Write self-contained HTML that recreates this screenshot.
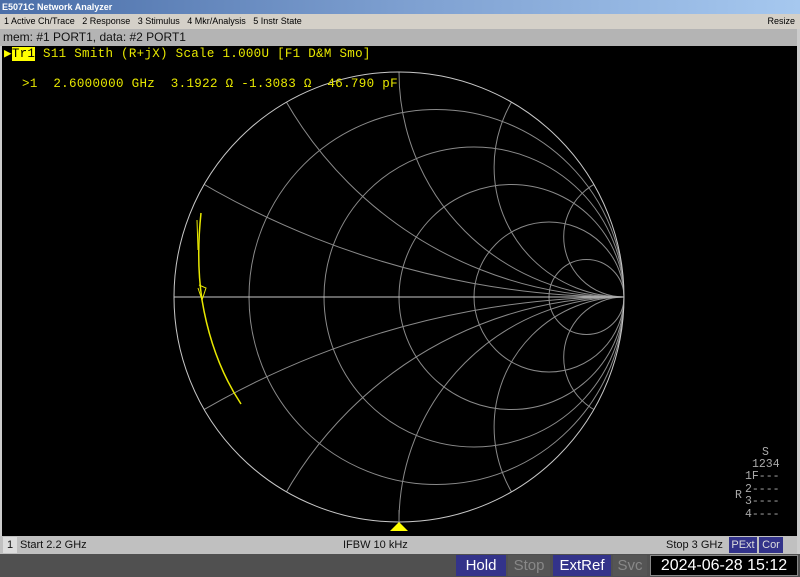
<!DOCTYPE html>
<html><head><style>
html,body{margin:0;width:800px;height:577px;overflow:hidden}
body{background:#000;font-family:"Liberation Sans",sans-serif;position:relative}
div{position:absolute;box-sizing:border-box}
.mono{font-family:"Liberation Mono",monospace}
.st{font-family:"Liberation Mono",monospace;font-size:11.5px;color:#aaa;white-space:pre;line-height:12px}
</style></head><body>
<div style="left:0;top:0;width:800px;height:14px;background:linear-gradient(90deg,#4a6ea8,#7d9fd0 50%,#a6c8ef);color:#fff;font-size:9px;font-weight:bold;line-height:14px;padding-left:2px">E5071C Network Analyzer</div>
<div style="left:0;top:14px;width:800px;height:15px;background:#d4d0c8;font-size:9px;line-height:15px;padding-left:4px">1 Active Ch/Trace &nbsp; 2 Response &nbsp; 3 Stimulus &nbsp; 4 Mkr/Analysis &nbsp; 5 Instr State<span style="position:absolute;right:5px">Resize</span></div>
<div style="left:0;top:29px;width:800px;height:17px;background:#b4b4b4;font-size:12px;line-height:17px;padding-left:3px;color:#111">mem: #1 PORT1, data: #2 PORT1</div>
<div style="left:0;top:46px;width:2px;height:490px;background:#ccc"></div>
<div style="left:797px;top:29px;width:3px;height:525px;background:#ccc"></div>
<svg style="position:absolute;left:0;top:0" width="800" height="577">
<defs><clipPath id="c"><circle cx="399" cy="297" r="225"/></clipPath></defs>
<g fill="none" stroke="#8a8a8a" stroke-width="1" clip-path="url(#c)">
<circle cx="436.5" cy="297" r="187.5"/>
<circle cx="474" cy="297" r="150"/>
<circle cx="511.5" cy="297" r="112.5"/>
<circle cx="549" cy="297" r="75"/>
<circle cx="586.5" cy="297" r="37.5"/>
<circle cx="624" cy="-542.7" r="839.7"/><circle cx="624" cy="1136.7" r="839.7"/>
<circle cx="624" cy="-92.7" r="389.7"/><circle cx="624" cy="686.7" r="389.7"/>
<circle cx="624" cy="72" r="225"/><circle cx="624" cy="522" r="225"/>
<circle cx="624" cy="167.1" r="129.9"/><circle cx="624" cy="426.9" r="129.9"/>
<circle cx="624" cy="236.7" r="60.3"/><circle cx="624" cy="357.3" r="60.3"/>
</g>
<circle cx="399" cy="297" r="225" fill="none" stroke="#c8c8c8"/>
<line x1="174" y1="297" x2="624" y2="297" stroke="#c8c8c8"/>
<path d="M201 213 Q196 260 202 300 Q212 360 241 404" fill="none" stroke="#e8e800" stroke-width="1.5"/>
<path d="M197 220 L198 250 M199 285 L206 288 L202 300 L198 288" fill="none" stroke="#e8e800" stroke-width="1"/>
<polygon points="390,531 408,531 399,522" fill="#ffff00"/>
<line x1="399" y1="510" x2="399" y2="522" stroke="#888"/>
</svg>
<div class="mono" style="left:4px;top:46px;font-size:12.5px;color:#e8e800;line-height:16px;white-space:pre;letter-spacing:0.3px"><span style="color:#ff0">&#9654;</span><span style="background:#ff0;color:#000">Tr1</span> S11 Smith (R+jX) Scale 1.000U [F1 D&amp;M Smo]</div>
<div class="mono" style="left:22px;top:76px;font-size:12.5px;color:#e8e800;line-height:16px;white-space:pre;letter-spacing:0.33px">&gt;1  2.6000000 GHz  3.1922 Ω -1.3083 Ω  46.790 pF</div>
<div class="st" style="left:762px;top:447px">S</div>
<div class="st" style="left:752px;top:459px">1234</div>
<div class="st" style="left:745px;top:471px">1F---</div>
<div class="st" style="left:745px;top:484px">2----</div>
<div class="st" style="left:735px;top:490px">R</div>
<div class="st" style="left:745px;top:496px">3----</div>
<div class="st" style="left:745px;top:509px">4----</div>
<div style="left:0;top:536px;width:797px;height:18px;background:#c0c0c0;font-size:11px;line-height:18px;color:#111">
<div style="left:3px;top:1px;width:14px;height:16px;background:#ddd;text-align:center;line-height:16px">1</div>
<div style="left:20px;top:0">Start 2.2 GHz</div>
<div style="left:343px;top:0">IFBW 10 kHz</div>
<div style="left:666px;top:0">Stop 3 GHz</div>
<div style="left:729px;top:1px;width:28px;height:16px;background:#33338a;color:#ddd;text-align:center;line-height:16px">PExt</div>
<div style="left:759px;top:1px;width:24px;height:16px;background:#33338a;color:#ddd;text-align:center;line-height:16px">Cor</div>
</div>
<div style="left:0;top:554px;width:800px;height:23px;background:#505050;font-size:15px;line-height:21px;overflow:hidden">
<div style="left:456px;top:1px;width:50px;height:21px;background:#33338a;color:#fff;text-align:center">Hold</div>
<div style="left:508px;top:1px;width:42px;height:21px;background:#555;color:#888;text-align:center">Stop</div>
<div style="left:553px;top:1px;width:58px;height:21px;background:#33338a;color:#fff;text-align:center">ExtRef</div>
<div style="left:613px;top:1px;width:34px;height:21px;background:#555;color:#888;text-align:center">Svc</div>
<div style="left:650px;top:1px;width:148px;height:21px;background:#000;color:#fff;text-align:center;font-size:16px;line-height:19px;border:1px solid #888">2024-06-28 15:12</div>
</div>
</body></html>
